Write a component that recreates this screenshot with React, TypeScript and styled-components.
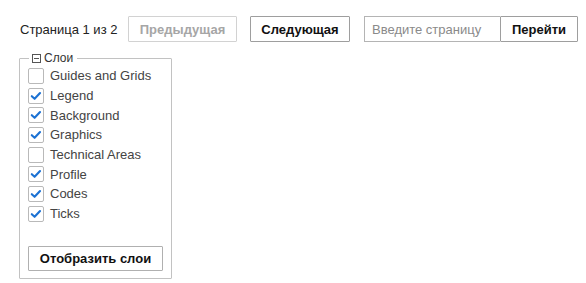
import { useState } from 'react';
import styled, { createGlobalStyle } from 'styled-components';

const GlobalStyle = createGlobalStyle`
  body {
    margin: 0;
    background: #fff;
    font-family: 'Liberation Sans', Arial, sans-serif;
    font-size: 13px;
    color: #222;
  }
`;

const LAYERS = [
  { name: 'Guides and Grids', checked: false },
  { name: 'Legend', checked: true },
  { name: 'Background', checked: true },
  { name: 'Graphics', checked: true },
  { name: 'Technical Areas', checked: false },
  { name: 'Profile', checked: true },
  { name: 'Codes', checked: true },
  { name: 'Ticks', checked: true },
];

const App = () => {
  const [layers, setLayers] = useState(LAYERS);

  const toggle = (index: number) => {
    setLayers((prev) => prev.map((l, i) => (i === index ? { ...l, checked: !l.checked } : l)));
  };

  return (
    <Page>
      <GlobalStyle />
      <Pager>
        <PageInfo>Страница 1 из 2</PageInfo>
        <PagerButton disabled $width={109}>
          Предыдущая
        </PagerButton>
        <PagerButton $width={100}>Следующая</PagerButton>
        <JumpGroup>
          <PageInput placeholder="Введите страницу" />
          <PagerButton $width={78}>Перейти</PagerButton>
        </JumpGroup>
      </Pager>

      <LayersBox>
        <Legend>
          <CollapseIcon viewBox="0 0 9 9">
            <rect x="0.5" y="0.5" width="8" height="8" fill="none" stroke="#555" />
            <line x1="2" y1="4.5" x2="7" y2="4.5" stroke="#555" />
          </CollapseIcon>
          Слои
        </Legend>
        <LayerList>
          {layers.map((layer, i) => (
            <LayerRow key={layer.name} onClick={() => toggle(i)}>
              <CheckBox>
                {layer.checked && (
                  <svg viewBox="0 0 16 16" width="14" height="14">
                    <path
                      d="M3.2 8.2 L6.4 11.2 L12.6 4.6"
                      fill="none"
                      stroke="#1d72d3"
                      strokeWidth="2.4"
                      strokeLinecap="round"
                      strokeLinejoin="round"
                    />
                  </svg>
                )}
              </CheckBox>
              <LayerName>{layer.name}</LayerName>
            </LayerRow>
          ))}
        </LayerList>
        <ShowButton>Отобразить слои</ShowButton>
      </LayersBox>
    </Page>
  );
};

export default App;

const Page = styled.div`
  padding: 16px 19px;
`;

const Pager = styled.div`
  display: flex;
  align-items: center;
  height: 26px;
`;

const PageInfo = styled.span`
  flex-shrink: 0;
  width: 95px;
  margin: 0 13px 0 1px;
  white-space: nowrap;
  color: #222;
`;

const PagerButton = styled.button<{ $width: number }>`
  flex-shrink: 0;
  width: ${({ $width }) => $width}px;
  height: 26px;
  margin-right: 13px;
  padding: 0;
  border: 1px solid #9e9e9e;
  border-radius: 1px;
  background: #fff;
  font-family: inherit;
  font-size: 13px;
  font-weight: bold;
  white-space: nowrap;
  color: #111;

  &:disabled {
    border-color: #d2d2d2;
    color: #a6a6a6;
  }
`;

const JumpGroup = styled.div`
  display: flex;
  flex-shrink: 0;
  margin-left: 1px;

  & > button {
    margin-right: 0;
  }
`;

const PageInput = styled.input`
  box-sizing: border-box;
  width: 136px;
  height: 26px;
  padding: 0 7px;
  border: 1px solid #b4b4b4;
  border-right: none;
  font-family: inherit;
  font-size: 13px;
  color: #222;

  &::placeholder {
    color: #8a8a8a;
  }
`;

const LayersBox = styled.fieldset`
  box-sizing: border-box;
  width: 153px;
  margin: 9px 0 0;
  padding: 0 8px 7px;
  border: 1px solid #c2c2c2;
  border-radius: 1px;
`;

const Legend = styled.legend`
  display: flex;
  align-items: center;
  gap: 3px;
  margin-left: 1px;
  padding: 0 4px 0 3px;
  font-size: 12px;
  color: #333;
`;

const CollapseIcon = styled.svg`
  width: 9px;
  height: 9px;
`;

const LayerList = styled.div`
  display: flex;
  flex-direction: column;
  padding-top: 1px;
`;

const LayerRow = styled.label`
  display: flex;
  align-items: center;
  gap: 6px;
  height: 19.7px;
  cursor: pointer;
`;

const CheckBox = styled.span`
  display: flex;
  align-items: center;
  justify-content: center;
  box-sizing: border-box;
  width: 16px;
  height: 16px;
  border: 1px solid #b9b9b9;
  border-radius: 2px;
  background: #fff;
`;

const LayerName = styled.span`
  color: #444;
`;

const ShowButton = styled.button`
  display: block;
  width: 135px;
  height: 25px;
  margin-top: 22px;
  padding: 0;
  border: 1px solid #b0b0b0;
  border-radius: 1px;
  background: #fff;
  font-family: inherit;
  font-size: 13px;
  font-weight: bold;
  color: #111;
`;
